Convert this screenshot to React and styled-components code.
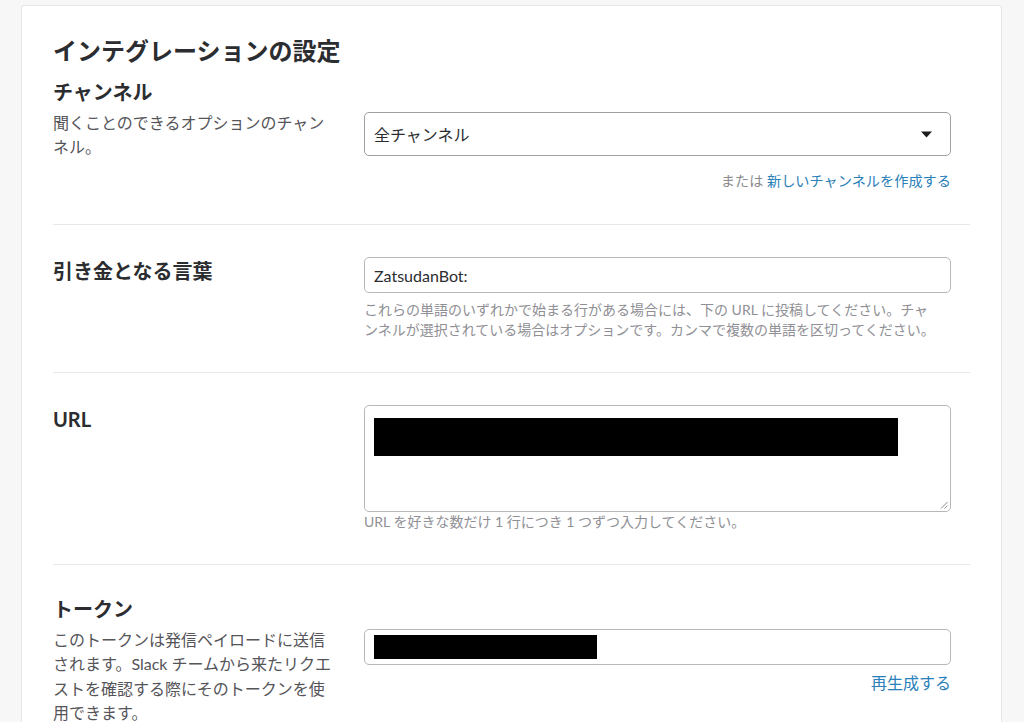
import styled, { createGlobalStyle } from 'styled-components';

const GlobalStyle = createGlobalStyle`
  html, body {
    margin: 0;
    padding: 0;
    background: #f7f7f7;
  }
  body {
    font-family: Lato, 'Noto Sans CJK JP', sans-serif;
    color: #2c2d30;
  }
`;

const Page = styled.div`
  height: 722px;
  padding: 5px 22px 0 21px;
  box-sizing: border-box;
  overflow: hidden;
`;

const Card = styled.div`
  background: #fff;
  border: 1px solid #e6e6e6;
  border-bottom: none;
  border-radius: 4px 4px 0 0;
  padding: 30px 31px 0 31px;
  min-height: 717px;
  box-sizing: border-box;
`;

const Title = styled.h1`
  margin: 0 0 12px;
  font-size: 24px;
  line-height: 30px;
  font-weight: 700;
  color: #2c2d30;
`;

const Section = styled.section`
  display: grid;
  grid-template-columns: 280px 587px;
  column-gap: 31px;
  padding-top: ${(p) => (p.$pt !== undefined ? p.$pt : 32)}px;
  padding-bottom: 32px;
  border-bottom: ${(p) => (p.$last ? 'none' : '1px solid #e8e8e8')};
`;

const LabelCol = styled.div`
  display: flex;
  flex-direction: column;
`;

const Heading = styled.h2`
  margin: 0 0 5px;
  font-size: 20px;
  line-height: 28px;
  font-weight: 700;
  color: #2c2d30;
`;

const Desc = styled.p`
  margin: 0;
  font-size: 16px;
  line-height: 24.4px;
  color: #555459;
`;

const FieldCol = styled.div`
  display: flex;
  flex-direction: column;
  padding-top: ${(p) => p.$offset || 0}px;
`;

const Box = styled.div`
  box-sizing: border-box;
  height: ${(p) => p.$h}px;
  border: 1px solid ${(p) => p.$border || '#b8b8b8'};
  border-radius: 5px;
  background: #fff;
  display: flex;
  align-items: ${(p) => (p.$top ? 'flex-start' : 'center')};
  justify-content: space-between;
  padding: ${(p) => p.$pad || '0 9px'};
  font-size: 16px;
  color: #2c2d30;
  position: relative;
`;

const Redacted = styled.div`
  background: #000;
  width: ${(p) => p.$w}px;
  height: ${(p) => p.$h}px;
`;

const Caret = styled.svg`
  width: 11px;
  height: 7px;
  margin-right: 9px;
`;

const Grip = styled.svg`
  position: absolute;
  right: 2px;
  bottom: 2px;
  width: 8px;
  height: 8px;
`;

const Help = styled.p`
  margin: ${(p) => p.$mt || 0}px 0 0;
  font-size: 14px;
  line-height: 20px;
  color: #8f8f95;
`;

const Aside = styled.div`
  margin-top: ${(p) => p.$mt || 0}px;
  text-align: right;
  font-size: ${(p) => p.$size || 15}px;
  line-height: 22px;
  color: #8b8b8b;
`;

const Link = styled.a`
  color: #2a80b9;
  text-decoration: none;
  cursor: pointer;
`;

export default function App() {
  return (
    <>
      <GlobalStyle />
      <Page>
        <Card>
          <Title>インテグレーションの設定</Title>

          <Section $pt={0}>
            <LabelCol>
              <Heading>チャンネル</Heading>
              <Desc>聞くことのできるオプションのチャンネル。</Desc>
            </LabelCol>
            <FieldCol $offset={34}>
              <Box $h={44} $border="#a0a0a0">
                <span>全チャンネル</span>
                <Caret viewBox="0 0 11 7">
                  <path d="M0 0.5 H11 L5.5 6.5 Z" fill="#1d1c1d" />
                </Caret>
              </Box>
              <Aside $mt={14} $size={14.2}>
                または <Link>新しいチャンネルを作成する</Link>
              </Aside>
            </FieldCol>
          </Section>

          <Section>
            <LabelCol>
              <Heading>引き金となる言葉</Heading>
            </LabelCol>
            <FieldCol>
              <Box $h={36}>ZatsudanBot:</Box>
              <Help $mt={7}>
                これらの単語のいずれかで始まる行がある場合には、下の URL に投稿してください。チャ
                <br />
                ンネルが選択されている場合はオプションです。カンマで複数の単語を区切ってください。
              </Help>
            </FieldCol>
          </Section>

          <Section>
            <LabelCol>
              <Heading>URL</Heading>
            </LabelCol>
            <FieldCol>
              <Box $h={107} $top $pad="12px 9px">
                <Redacted $w={524} $h={38} />
                <Grip viewBox="0 0 8 8">
                  <path d="M7.5 1 L1 7.5 M7.5 4.5 L4.5 7.5" stroke="#8a8a8a" strokeWidth="1" />
                </Grip>
              </Box>
              <Help>URL を好きな数だけ 1 行につき 1 つずつ入力してください。</Help>
            </FieldCol>
          </Section>

          <Section $pt={30} $last>
            <LabelCol>
              <Heading>トークン</Heading>
              <Desc>
                このトークンは発信ペイロードに送信されます。Slack チームから来たリクエストを確認する際にそのトークンを使用できます。
              </Desc>
            </LabelCol>
            <FieldCol $offset={34}>
              <Box $h={36}>
                <Redacted $w={223} $h={24} />
              </Box>
              <Aside $mt={7} $size={16}>
                <Link>再生成する</Link>
              </Aside>
            </FieldCol>
          </Section>
        </Card>
      </Page>
    </>
  );
}
